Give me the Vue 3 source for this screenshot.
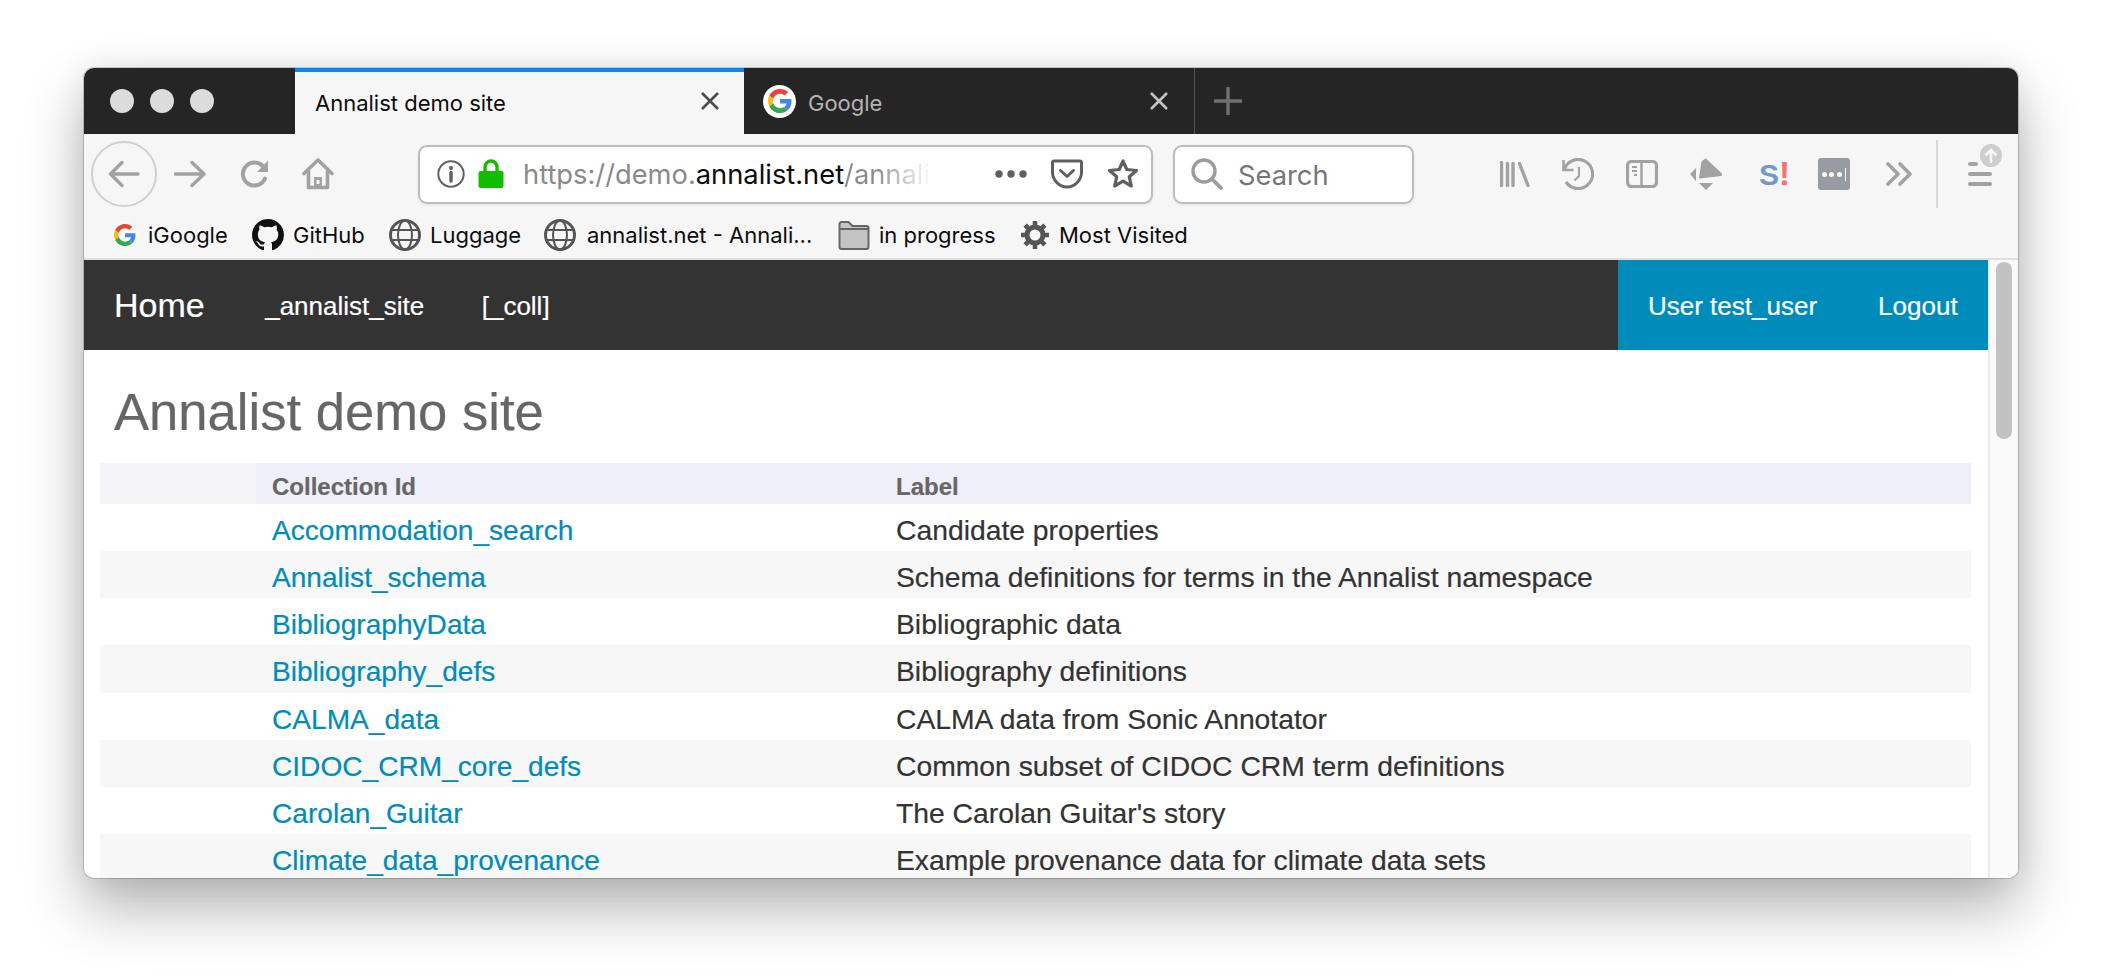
<template>
  <div class="stage">
    <div class="window">
      <div class="tabbar">
        <div class="traffic">
          <span class="dot"></span><span class="dot"></span><span class="dot"></span>
        </div>
        <div class="tab active">
          <span class="tab-title">Annalist demo site</span>
          <svg class="tab-x" viewBox="0 0 20 20" width="20" height="20"><path d="M2 2 18 18M18 2 2 18" stroke="#4c4c4c" stroke-width="2.600" fill="none"/></svg>
        </div>
        <div class="tab inactive">
          <span class="g-round big">
            <svg viewBox="0 0 48 48" width="24" height="24">
              <path fill="#ea4335" d="M24 9.500c3.540 0 6.710 1.220 9.210 3.600l6.850-6.850C35.900 2.380 30.470 0 24 0 14.620 0 6.510 5.380 2.560 13.220l7.980 6.190C12.430 13.720 17.740 9.500 24 9.500z"/>
              <path fill="#4285f4" d="M46.980 24.550c0-1.570-.15-3.090-.38-4.550H24v9.020h12.940c-.58 2.960-2.260 5.480-4.780 7.180l7.730 6c4.510-4.180 7.090-10.360 7.090-17.650z"/>
              <path fill="#fbbc05" d="M10.530 28.590c-.48-1.450-.76-2.990-.76-4.590s.27-3.140.76-4.590l-7.980-6.190C.92 16.460 0 20.120 0 24c0 3.880.92 7.540 2.560 10.780l7.970-6.190z"/>
              <path fill="#34a853" d="M24 48c6.480 0 11.930-2.130 15.890-5.810l-7.730-6c-2.150 1.450-4.920 2.300-8.160 2.300-6.260 0-11.570-4.220-13.470-9.910l-7.980 6.190C6.510 42.620 14.620 48 24 48z"/>
            </svg>
          </span>
          <span class="tab-title dim">Google</span>
          <svg class="tab-x" viewBox="0 0 20 20" width="20" height="20"><path d="M2 2 18 18M18 2 2 18" stroke="#c4c4c4" stroke-width="2.600" fill="none"/></svg>
        </div>
        <svg class="plus" viewBox="0 0 28 28" width="28" height="28"><path d="M14 1v26M1 14h26" stroke="#707070" stroke-width="3.400" stroke-linecap="round" fill="none"/></svg>
      </div>

      <div class="toolbar">
        <div class="back-btn">
          <svg viewBox="0 0 32 32" width="32" height="32"><path d="M30 16H3M14 4.500 2.500 16 14 27.500" stroke="#a2a2a2" stroke-width="3.400" stroke-linecap="round" stroke-linejoin="round" fill="none"/></svg>
        </div>
        <svg class="fwd" viewBox="0 0 32 32" width="32" height="32"><path d="M1.500 16H30M18 4.500 30 16 18 27.500" stroke="#a2a2a2" stroke-width="3.400" stroke-linecap="round" stroke-linejoin="round" fill="none"/></svg>
        <svg class="reload" viewBox="0 0 32 32" width="32" height="32"><path d="M26 20.500A11.500 11.500 0 1 1 24.500 9L27 12" stroke="#a2a2a2" stroke-width="4" stroke-linecap="round" fill="none"/><path d="M29 2.500V14H18z" fill="#a2a2a2"/></svg>
        <svg class="home" viewBox="0 0 32 32" width="32" height="32"><path d="M2 15.500 16 2l14 13.500M6.500 13v16.500h19V13" stroke="#a2a2a2" stroke-width="3.600" stroke-linecap="round" stroke-linejoin="round" fill="none"/><rect x="12" y="19" width="8" height="10" fill="#a2a2a2"/><rect x="14.500" y="22" width="3" height="4" fill="#f6f6f6"/></svg>

        <div class="urlbar">
          <svg class="info" viewBox="0 0 28 28" width="28" height="28"><circle cx="14" cy="14" r="12.700" stroke="#5f5f5f" stroke-width="2" fill="none"/><circle cx="14" cy="8" r="2" fill="#5f5f5f"/><path d="M14 12.500v8.500" stroke="#5f5f5f" stroke-width="3.400" stroke-linecap="round"/></svg>
          <svg class="lock" viewBox="0 0 26 30" width="26" height="30"><path d="M7 13V8a6 6 0 0 1 12 0v5" stroke="#12bc00" stroke-width="3.400" fill="none"/><rect x="0.500" y="12" width="25" height="17" rx="2" fill="#12bc00"/></svg>
          <span class="url-text">https://demo.<b class="host">annalist.net</b><span class="url-rest">/annali</span></span>
          <svg class="more" viewBox="0 0 32 8" width="32" height="8"><circle cx="4" cy="4" r="3.700" fill="#5f5f5f"/><circle cx="16" cy="4" r="3.700" fill="#5f5f5f"/><circle cx="28" cy="4" r="3.700" fill="#5f5f5f"/></svg>
          <svg class="pocket" viewBox="0 0 32 30" width="32" height="30"><path d="M3 2h26a1.500 1.500 0 0 1 1.500 1.500V13c0 8-6.500 15-14.500 15S1.500 21 1.500 13V3.500A1.500 1.500 0 0 1 3 2z" stroke="#5f5f5f" stroke-width="3" fill="none"/><path d="M9.500 11.500 16 17.500l6.500-6" stroke="#5f5f5f" stroke-width="3" stroke-linecap="round" stroke-linejoin="round" fill="none"/></svg>
          <svg class="star" viewBox="0 0 32 32" width="32" height="32"><path d="M16 3l3.800 8.500 9.700 1-7.200 6.300 2 9.200-8.300-4.800L7.700 28l2-9.200-7.200-6.300 9.700-1z" stroke="#5f5f5f" stroke-width="3.200" stroke-linejoin="round" fill="none"/></svg>
        </div>

        <div class="searchbar">
          <svg viewBox="0 0 32 32" width="32" height="32"><circle cx="13" cy="13" r="11" stroke="#9c9c9c" stroke-width="3.400" fill="none"/><path d="M21 21 30 30" stroke="#9c9c9c" stroke-width="3.800" stroke-linecap="round"/></svg>
          <span class="search-text">Search</span>
        </div>

        <div class="tools">
          <svg class="t-lib" viewBox="0 0 30 26" width="30" height="26"><path d="M1.500 1.500v23M7.500 2.500v22M13 2.500v22M19.500 2.500l8.500 22" stroke="#a2a2a2" stroke-width="3.400" stroke-linecap="round" fill="none"/></svg>
          <svg class="t-hist" viewBox="0 0 32 32" width="32" height="32"><path d="M2.500 11A14.500 14.500 0 1 1 4 24" stroke="#a2a2a2" stroke-width="3.200" fill="none"/><path d="M1.500 2v10h10" stroke="#a2a2a2" stroke-width="2.600" fill="none"/><path d="M17 9v9l-4.500 4.500" stroke="#a2a2a2" stroke-width="2" fill="none"/></svg>
          <svg class="t-side" viewBox="0 0 32 28" width="32" height="28"><rect x="1.500" y="1.500" width="29" height="25" rx="4" stroke="#a2a2a2" stroke-width="3.200" fill="none"/><path d="M15.500 2v24" stroke="#a2a2a2" stroke-width="2.400"/><path d="M6 7h5M6 11h5M8 15h3" stroke="#a2a2a2" stroke-width="2"/></svg>
          <svg class="t-ext" viewBox="0 0 32 32" width="32" height="32"><path d="M15.500 1.500 31 16v1L10 19.500 12.500 4z" fill="#a2a2a2" stroke="#a2a2a2" stroke-width="2" stroke-linejoin="round"/><path d="M6 10 0 16l6 7zM9 25l14 0-7 7z" fill="#a2a2a2"/></svg>
          <div class="t-s"><span class="s-letter">S</span><span class="s-bang">!</span></div>
          <div class="t-pass"><span class="pass-dot"></span><span class="pass-dot"></span><span class="pass-dot"></span><span class="pass-bar"></span></div>
          <svg class="t-more" viewBox="0 0 26 24" width="26" height="24"><path d="M2 2 12 12 2 22M14 2 24 12 14 22" stroke="#a2a2a2" stroke-width="3.600" stroke-linecap="round" stroke-linejoin="round" fill="none"/></svg>
          <span class="t-div"></span>
          <div class="t-menu">
            <span class="bar short"></span><span class="bar"></span><span class="bar"></span>
            <span class="badge">
              <svg viewBox="0 0 16 16" width="16" height="16"><path d="M8 15V2M2.500 7.500 8 2l5.500 5.500" stroke="#f6f6f6" stroke-width="2.600" fill="none"/></svg>
            </span>
          </div>
        </div>
      </div>

      <div class="bookmarks">
        <div v-for="b in bookmarks" :key="b.label" class="bm" :class="b.cls">
          <span v-if="b.icon === 'google'" class="g-round">
            <svg viewBox="0 0 48 48" width="22" height="22">
              <path fill="#ea4335" d="M24 9.500c3.540 0 6.710 1.220 9.210 3.600l6.850-6.850C35.900 2.380 30.470 0 24 0 14.620 0 6.510 5.380 2.560 13.220l7.980 6.190C12.430 13.720 17.740 9.500 24 9.500z"/>
              <path fill="#4285f4" d="M46.980 24.550c0-1.570-.15-3.090-.38-4.550H24v9.020h12.940c-.58 2.960-2.260 5.480-4.780 7.180l7.730 6c4.510-4.180 7.090-10.360 7.090-17.650z"/>
              <path fill="#fbbc05" d="M10.530 28.590c-.48-1.450-.76-2.990-.76-4.590s.27-3.140.76-4.590l-7.980-6.190C.92 16.460 0 20.120 0 24c0 3.880.92 7.540 2.560 10.780l7.970-6.190z"/>
              <path fill="#34a853" d="M24 48c6.480 0 11.930-2.130 15.890-5.810l-7.730-6c-2.150 1.450-4.920 2.300-8.160 2.300-6.260 0-11.570-4.220-13.470-9.910l-7.980 6.190C6.510 42.620 14.620 48 24 48z"/>
            </svg>
          </span>
          <svg v-else-if="b.icon === 'github'" class="bm-icon" viewBox="0 0 16 16" width="32" height="32"><path fill="#111" d="M8 0C3.580 0 0 3.580 0 8c0 3.540 2.290 6.530 5.470 7.590.4.070.55-.17.55-.38 0-.19-.01-.82-.01-1.490-2.010.37-2.530-.49-2.690-.94-.09-.23-.48-.94-.82-1.130-.28-.15-.68-.52-.01-.53.630-.01 1.080.58 1.230.82.720 1.210 1.870.87 2.330.66.070-.52.280-.87.510-1.070-1.780-.2-3.640-.89-3.640-3.950 0-.87.310-1.590.820-2.150-.08-.2-.36-1.020.08-2.120 0 0 .67-.21 2.200.82.640-.18 1.320-.27 2-.27.680 0 1.360.09 2 .27 1.530-1.040 2.200-.82 2.200-.82.440 1.100.160 1.920.080 2.120.510.560.820 1.270.820 2.150 0 3.070-1.870 3.750-3.650 3.950.290.250.540.730.540 1.480 0 1.070-.01 1.930-.01 2.200 0 .21.150.46.550.38A8.013 8.013 0 0016 8c0-4.420-3.580-8-8-8z"/></svg>
          <svg v-else-if="b.icon === 'globe'" class="bm-icon" viewBox="0 0 32 32" width="32" height="32"><g stroke="#555" fill="none"><circle cx="16" cy="16" r="14.500" stroke-width="3"/><ellipse cx="16" cy="16" rx="7" ry="14.500" stroke-width="2"/><path d="M2 11h28M2 21h28" stroke-width="2"/></g></svg>
          <svg v-else-if="b.icon === 'folder'" class="bm-icon" viewBox="0 0 32 30" width="32" height="30"><path d="M1.500 4a2 2 0 0 1 2-2h7l4 4h14a2 2 0 0 1 2 2v19a2 2 0 0 1-2 2h-25a2 2 0 0 1-2-2z" fill="#c4c4c4" stroke="#666" stroke-width="2"/><path d="M2 9h28" stroke="#666" stroke-width="2"/></svg>
          <svg v-else-if="b.icon === 'gear'" class="bm-icon" viewBox="0 0 28 28" width="28" height="28"><g stroke="#555" stroke-width="4.500"><path d="M14 0v28M0 14h28M4.100 4.100l19.800 19.800M23.900 4.100 4.100 23.900"/></g><circle cx="14" cy="14" r="8" fill="#f6f6f6" stroke="#555" stroke-width="5"/></svg>
          <span class="bm-label">{{ b.label }}</span>
        </div>
      </div>

      <div class="viewport">
        <div class="page">
          <div class="topnav">
            <div class="nav-left">
              <a class="nav-home">Home</a>
              <a class="nav-link">_annalist_site</a>
              <a class="nav-link">[_coll]</a>
            </div>
            <div class="nav-right">
              <a class="nav-link">User test_user</a>
              <a class="nav-link">Logout</a>
            </div>
          </div>
          <h1 class="title">Annalist demo site</h1>
          <div class="table">
            <div class="row head">
              <div class="cell-check"></div>
              <div class="cell-id">Collection Id</div>
              <div class="cell-label">Label</div>
            </div>
            <div v-for="(r, i) in rows" :key="r.id" class="row body-row" :class="{ odd: i % 2 === 1 }">
              <div class="cell-check"></div>
              <div class="cell-id"><a class="link">{{ r.id }}</a></div>
              <div class="cell-label">{{ r.label }}</div>
            </div>
          </div>
        </div>
        <div class="scrollbar"><span class="thumb"></span></div>
      </div>
    </div>
  </div>
</template>

<script setup>
const bookmarks = [
  { label: 'iGoogle', icon: 'google', cls: 'bm-google' },
  { label: 'GitHub', icon: 'github', cls: 'bm-github' },
  { label: 'Luggage', icon: 'globe', cls: 'bm-luggage' },
  { label: 'annalist.net - Annali...', icon: 'globe', cls: 'bm-annalist' },
  { label: 'in progress', icon: 'folder', cls: 'bm-folder' },
  { label: 'Most Visited', icon: 'gear', cls: 'bm-gear' }
]

const rows = [
  { id: 'Accommodation_search', label: 'Candidate properties' },
  { id: 'Annalist_schema', label: 'Schema definitions for terms in the Annalist namespace' },
  { id: 'BibliographyData', label: 'Bibliographic data' },
  { id: 'Bibliography_defs', label: 'Bibliography definitions' },
  { id: 'CALMA_data', label: 'CALMA data from Sonic Annotator' },
  { id: 'CIDOC_CRM_core_defs', label: 'Common subset of CIDOC CRM term definitions' },
  { id: 'Carolan_Guitar', label: "The Carolan Guitar's story" },
  { id: 'Climate_data_provenance', label: 'Example provenance data for climate data sets' }
]
</script>

<style>
html, body {
  margin: 0;
  background: #fff;
  overflow: hidden;
}
</style>

<style scoped>
.stage {
  width: 2102px;
  height: 978px;
  padding: 68px 84px 100px;
  box-sizing: border-box;
  overflow: hidden;
  background: #fff;
  font-family: Inter, "Liberation Sans", sans-serif;
}

.window {
  width: 1934px;
  height: 810px;
  border-radius: 10px;
  overflow: hidden;
  display: flex;
  flex-direction: column;
  background: #f6f6f6;
  box-shadow: 0 0 0 1px rgba(0, 0, 0, 0.18), 0 30px 60px rgba(0, 0, 0, 0.3), 0 0 30px rgba(0, 0, 0, 0.08);
}

.tabbar {
  height: 66px;
  flex: none;
  display: flex;
  align-items: stretch;
  background: #252525;
}

.traffic {
  width: 211px;
  flex: none;
  display: flex;
  align-items: center;
  gap: 16px;
  padding: 0 0 0 26px;
  box-sizing: border-box;
}

.dot {
  width: 24px;
  height: 24px;
  border-radius: 50%;
  background: #dcdcdc;
}

.tab {
  width: 449px;
  flex: none;
  display: flex;
  align-items: center;
  box-sizing: border-box;
}

.tab.active {
  background: #f6f6f6;
  border-top: 4px solid #0a84ff;
  padding: 0 24px 4px 20px;
  color: #0c0c0d;
}

.tab.inactive {
  width: 451px;
  padding: 0 25px 0 19px;
  border-right: 1px solid #555;
}

.tab-title {
  font-size: 22px;
  flex: 1;
  padding-top: 3px;
  white-space: nowrap;
}

.tab-title.dim {
  color: #b4b4b4;
}

.g-round {
  width: 25px;
  height: 25px;
  border-radius: 50%;
  background: #fff;
  display: flex;
  align-items: center;
  justify-content: center;
  flex: none;
}

.g-round.big {
  width: 33px;
  height: 33px;
  margin-right: 12px;
}

.plus {
  margin: 0 0 0 19px;
  align-self: center;
}

.toolbar {
  height: 80px;
  flex: none;
  display: flex;
  align-items: center;
  padding-left: 7px;
  background: #f6f6f6;
}

.back-btn {
  width: 66px;
  height: 66px;
  box-sizing: border-box;
  flex: none;
  border: 2px solid #d0d0d0;
  border-radius: 50%;
  display: flex;
  align-items: center;
  justify-content: center;
}

.fwd {
  margin-left: 17px;
  flex: none;
}

.reload {
  margin-left: 33px;
  flex: none;
}

.home {
  margin-left: 31px;
  flex: none;
}

.urlbar {
  width: 735px;
  height: 59px;
  box-sizing: border-box;
  margin-left: 84px;
  flex: none;
  display: flex;
  align-items: center;
  background: #fff;
  border: 2px solid #bdbdbd;
  border-radius: 9px;
  padding-left: 17px;
  box-shadow: 0 1px 3px rgba(0, 0, 0, 0.08);
}

.lock {
  margin-left: 13px;
  flex: none;
}

.url-text {
  width: 437px;
  margin-left: 19px;
  font-size: 27.300px;
  color: #8a8a8a;
  white-space: nowrap;
  flex: none;
}

.host {
  font-weight: 400;
  color: #0c0c0d;
}

.url-rest {
  background: linear-gradient(90deg, #8a8a8a 35%, #f4f4f4 95%);
  -webkit-background-clip: text;
  background-clip: text;
  color: transparent;
}

.more {
  margin-left: 35px;
  flex: none;
}

.pocket {
  margin-left: 24px;
  flex: none;
}

.star {
  margin-left: 24px;
  flex: none;
}

.searchbar {
  width: 241px;
  height: 59px;
  box-sizing: border-box;
  margin-left: 20px;
  flex: none;
  display: flex;
  align-items: center;
  background: #fff;
  border: 2px solid #bdbdbd;
  border-radius: 9px;
  padding-left: 16px;
  box-shadow: 0 1px 3px rgba(0, 0, 0, 0.08);
}

.search-text {
  margin-left: 15px;
  padding-top: 2px;
  font-size: 27.300px;
  color: #757575;
}

.tools {
  display: flex;
  align-items: center;
  margin-left: 86px;
  height: 100%;
}

.t-lib {
  flex: none;
}

.t-hist {
  margin-left: 32px;
  flex: none;
}

.t-side {
  margin-left: 32px;
  flex: none;
}

.t-ext {
  margin-left: 32px;
  flex: none;
}

.t-s {
  width: 30px;
  margin-left: 37px;
  flex: none;
  display: flex;
  align-items: baseline;
  font-family: "Liberation Sans", sans-serif;
  font-weight: 700;
  line-height: 32px;
}

.s-letter {
  font-size: 30px;
  color: #7297cc;
}

.s-bang {
  font-size: 33px;
  color: #f96f72;
}

.t-pass {
  margin-left: 29px;
  width: 32px;
  height: 32px;
  border-radius: 3px;
  background: #979ca3;
  flex: none;
  display: flex;
  align-items: center;
  justify-content: center;
  gap: 2.500px;
}

.pass-dot {
  width: 5px;
  height: 5px;
  border-radius: 50%;
  background: #f6f6f6;
}

.pass-bar {
  width: 1px;
  height: 13px;
  background: #f6f6f6;
  margin-left: 1px;
}

.t-more {
  margin-left: 36px;
  flex: none;
}

.t-div {
  width: 2px;
  height: 68px;
  margin-left: 24px;
  background: #d8d8d8;
  flex: none;
}

.t-menu {
  position: relative;
  width: 24px;
  height: 24px;
  margin-left: 30px;
  display: flex;
  flex-direction: column;
  justify-content: space-between;
  flex: none;
}

.bar {
  width: 24px;
  height: 4px;
  border-radius: 2px;
  background: #a2a2a2;
}

.bar.short {
  width: 10px;
}

.badge {
  position: absolute;
  left: 12px;
  top: -18px;
  width: 22px;
  height: 23px;
  border-radius: 50%;
  background: #cdcdcd;
  display: flex;
  align-items: center;
  justify-content: center;
}

.bookmarks {
  height: 41px;
  flex: none;
  display: flex;
  align-items: center;
  padding: 0 0 3px 28px;
  border-bottom: 2px solid #e0e0e0;
  font-size: 22px;
  color: #0c0c0d;
}

.bm {
  display: flex;
  align-items: center;
  white-space: nowrap;
  flex: none;
}

.bm-icon {
  flex: none;
}

.bm-label {
  margin-left: 9px;
}

.bm-google {
  width: 140px;
}

.bm-github {
  width: 137px;
}

.bm-luggage {
  width: 155px;
}

.bm-annalist {
  width: 294px;
}

.bm-folder {
  width: 183px;
}

.bm-google .bm-label,
.bm-annalist .bm-label {
  margin-left: 11px;
}

.bm-gear .bm-label {
  margin-left: 10px;
}

.viewport {
  flex: 1;
  min-height: 0;
  display: flex;
  overflow: hidden;
  background: #fff;
}

.page {
  width: 1904px;
  flex: none;
  font-family: "Liberation Sans", Arial, sans-serif;
  -webkit-text-stroke: 0.2px currentColor;
}

.topnav {
  height: 90px;
  display: flex;
  justify-content: space-between;
  background: #333;
  color: #fff;
}

.nav-left {
  display: flex;
  align-items: center;
  padding-left: 30px;
  gap: 60.500px;
}

.nav-left .nav-link:last-child {
  margin-left: -3px;
}

.nav-right {
  width: 370px;
  box-sizing: border-box;
  display: flex;
  align-items: center;
  padding-left: 30px;
  gap: 61px;
  background: #008cba;
}

.nav-home {
  font-size: 34px;
}

.nav-link {
  padding-top: 2px;
  font-size: 26px;
}

.title {
  margin: 0;
  height: 113px;
  padding: 32px 0 0 30px;
  box-sizing: border-box;
  font-size: 52.600px;
  line-height: 60px;
  font-weight: 400;
  color: #666;
}

.table {
  margin: 0 17px 0 16px;
}

.row {
  height: 47.170px;
  box-sizing: border-box;
  display: flex;
  font-size: 28.100px;
  color: #333;
}

.body-row {
  align-items: baseline;
  padding-top: 10px;
}

.row.odd {
  background: #f7f7f7;
}

.row.head {
  height: 41px;
  align-items: center;
  font-size: 24px;
  font-weight: 700;
  color: #666;
  background: #eeeff8;
}

.row.head .cell-check {
  align-self: stretch;
  background: #f5f5f7;
}

.row.head .cell-id,
.row.head .cell-label {
  padding-top: 7px;
}

.cell-check {
  width: 156px;
  flex: none;
}

.cell-id {
  width: 624px;
  padding-left: 16px;
  box-sizing: border-box;
  flex: none;
}

.cell-label {
  padding-left: 16px;
  font-size: 28.300px;
}

.row.head .cell-label {
  font-size: 24px;
}

.link {
  color: #008cba;
}

.scrollbar {
  width: 30px;
  flex: none;
  box-sizing: border-box;
  background: #fafafa;
  border-left: 2px solid #eaeaea;
  padding: 2px 6px 0 6px;
  display: flex;
  flex-direction: column;
}

.thumb {
  width: 16px;
  height: 177px;
  border-radius: 8px;
  background: #c1c1c1;
}
</style>
